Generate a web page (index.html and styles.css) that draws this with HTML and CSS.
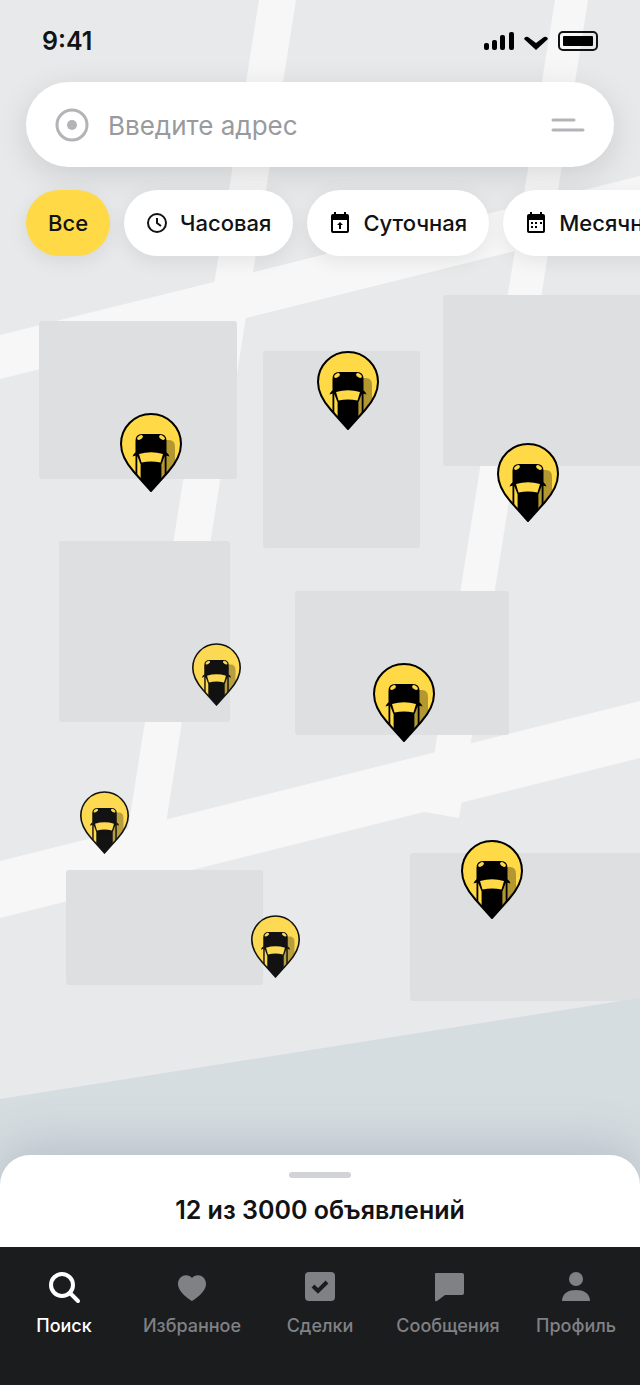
FILE: index.html
```html
<!DOCTYPE html>
<html lang="ru">
<head>
  <meta charset="UTF-8">
  <title>Карта объявлений</title>
  <meta name="viewport" content="width=device-width, initial-scale=1">
  <link rel="stylesheet" href="styles.css">
</head>
<body>
  <svg class="map" viewBox="0 0 640 1385" preserveAspectRatio="xMidYMid slice" role="img" aria-label="Карта">
    <defs>
      <clipPath id="pin-clip">
        <path d="M31 78 L14 59 C5 49 1 41 1 31 A30 30 0 0 1 61 31 C61 41 57 49 48 59 Z"/>
      </clipPath>
      <symbol id="pin" viewBox="0 0 62 79">
        <path class="pin-body" d="M31 78 L14 59 C5 49 1 41 1 31 A30 30 0 0 1 61 31 C61 41 57 49 48 59 Z"/>
        <g clip-path="url(#pin-clip)">
          <path class="pin-shadow" d="M45 27 H49 Q55 27 55 34 V70 H45 Z"/>
          <path d="M15.5 79 V28 Q15.5 21 22 21 H40 Q46.5 21 46.5 28 V79 Z"/>
          <path d="M16 39 Q13 41 12.5 43.5 L16 42.5 Z M46 39 Q49 41 49.5 43.5 L46 42.5 Z"/>
          <ellipse class="pin-light" cx="20" cy="24.5" rx="3.2" ry="1.8" transform="rotate(-35 20 24.5)"/>
          <ellipse class="pin-light" cx="42" cy="24.5" rx="3.2" ry="1.8" transform="rotate(35 42 24.5)"/>
          <path class="pin-light" d="M19 41 Q31 37.5 43 41 L40.5 49.5 Q31 47.5 21.5 49.5 Z"/>
          <path class="pin-light" d="M17.3 43 L20.6 51.5 V66 L17.3 62 Z"/>
          <path class="pin-side" d="M44.7 43 L41.4 51.5 V66 L44.7 62 Z"/>
        </g>
        <path class="pin-line" d="M31 78 L14 59 C5 49 1 41 1 31 A30 30 0 0 1 61 31 C61 41 57 49 48 59 Z"/>
      </symbol>
    </defs>

    <rect class="land" width="640" height="1385"/>

    <g class="roads">
      <path d="M0 335 L640 176 V220 L0 379 Z"/>
      <path d="M0 861 L640 701 V758 L0 918 Z"/>
      <path d="M259 0 H296 L164 836 L125 848 Z"/>
      <path d="M555 0 H588 L459 818 L425 812 Z"/>
    </g>

    <g class="blocks">
      <rect x="39" y="321" width="198" height="158" rx="3"/>
      <rect x="263" y="351" width="157" height="197" rx="3"/>
      <rect x="443" y="295" width="200" height="171" rx="3"/>
      <rect x="59" y="541" width="171" height="181" rx="3"/>
      <rect x="295" y="591" width="214" height="144" rx="3"/>
      <rect x="66" y="870" width="197" height="115" rx="3"/>
      <rect x="410" y="853" width="233" height="148" rx="3"/>
    </g>

    <path class="water" d="M0 1099 L640 998 V1385 H0 Z"/>

    <use href="#pin" x="120" y="413" width="62" height="79"/>
    <use href="#pin" x="317" y="351" width="62" height="79"/>
    <use href="#pin" x="497" y="443" width="62" height="79"/>
    <use href="#pin" x="373" y="663" width="62" height="79"/>
    <use href="#pin" x="461" y="840" width="62" height="79"/>
    <use class="far" href="#pin" x="192" y="643" width="49" height="63"/>
    <use class="far" href="#pin" x="80" y="791" width="49" height="63"/>
    <use class="far" href="#pin" x="251" y="915" width="49" height="63"/>
  </svg>

  <div class="status-bar">
    <span>9:41</span>
    <svg width="114" height="22" viewBox="0 0 114 22" aria-hidden="true">
      <rect x="0" y="13" width="5" height="7" rx="2"/>
      <rect x="8" y="10" width="5" height="10" rx="2"/>
      <rect x="16" y="5" width="5" height="15" rx="2"/>
      <rect x="25" y="2" width="5" height="18" rx="2"/>
      <path d="M40 9 Q41 6 44 7 L52 13 L60 7 Q63 6 64 9 L52 20 Z"/>
      <rect x="75" y="2" width="38" height="18" rx="4" fill="none" stroke="#111214" stroke-width="2"/>
      <rect x="79" y="6" width="30" height="10" rx="1"/>
    </svg>
  </div>

  <form class="search">
    <svg width="34" height="34" viewBox="0 0 34 34" aria-hidden="true">
      <circle cx="17" cy="17" r="15" fill="none" stroke="#b3b4b7" stroke-width="3"/>
      <circle cx="17" cy="17" r="5" fill="#b3b4b7"/>
    </svg>
    <input type="text" placeholder="Введите адрес" aria-label="Введите адрес">
    <button type="button" aria-label="Фильтры">
      <svg width="34" height="14" viewBox="0 0 34 14">
        <path d="M2 2 H23 M2 12 H32" stroke="#b3b4b7" stroke-width="3" stroke-linecap="round"/>
      </svg>
    </button>
  </form>

  <div class="filters">
    <button class="active">Все</button>
    <button>
      <svg width="22" height="22" viewBox="0 0 22 22" fill="none" stroke="#111214" stroke-width="2">
        <circle cx="11" cy="11" r="9"/>
        <path d="M11 6 V11 L15 14"/>
      </svg>
      Часовая
    </button>
    <button>
      <svg width="22" height="22" viewBox="0 0 22 22">
        <path d="M4 2 H5 V0 H7 V2 H15 V0 H17 V2 H18 Q20 2 20 4 V19 Q20 21 18 21 H4 Q2 21 2 19 V4 Q2 2 4 2 Z M4 8 V19 H18 V8 Z" fill-rule="evenodd"/>
        <path d="M11 10 L14 13 H12 V17 H10 V13 H8 Z"/>
      </svg>
      Суточная
    </button>
    <button>
      <svg width="22" height="22" viewBox="0 0 22 22">
        <path d="M4 2 H5 V0 H7 V2 H15 V0 H17 V2 H18 Q20 2 20 4 V19 Q20 21 18 21 H4 Q2 21 2 19 V4 Q2 2 4 2 Z M4 8 V19 H18 V8 Z" fill-rule="evenodd"/>
        <path d="M6 10 h2 v2 h-2 z M10 10 h2 v2 h-2 z M15 10 h2 v2 h-2 z M6 14 h2 v2 h-2 z M10 14 h2 v2 h-2 z"/>
      </svg>
      Месячная
    </button>
  </div>

  <section class="sheet">
    <div class="handle"></div>
    <h1>12 из 3000 объявлений</h1>
  </section>

  <nav class="tabs">
    <a class="active" href="#">
      <svg width="34" height="34" viewBox="0 0 34 34" fill="none" stroke="currentColor">
        <circle cx="15" cy="15" r="11" stroke-width="4"/>
        <path d="M23 23 L31 31" stroke-width="4" stroke-linecap="round"/>
      </svg>
      Поиск
    </a>
    <a href="#">
      <svg width="34" height="34" viewBox="0 0 34 34" fill="currentColor">
        <path d="M17 31 C15 30 3 22 3 14 C3 5 13 3 17 8 C21 3 31 5 31 14 C31 22 19 30 17 31 Z"/>
      </svg>
      Избранное
    </a>
    <a href="#">
      <svg width="34" height="34" viewBox="0 0 34 34">
        <rect x="2" y="2" width="30" height="29" rx="4" fill="currentColor"/>
        <path d="M10 16 L15 21 L24 12" fill="none" stroke="#1b1c1e" stroke-width="4"/>
      </svg>
      Сделки
    </a>
    <a href="#">
      <svg width="34" height="34" viewBox="0 0 34 34" fill="currentColor">
        <path d="M5 3 H31 Q33 3 33 5 V23 Q33 25 31 25 H14 L6 31 Q4 32 4 30 V4 Q4 3 5 3 Z"/>
      </svg>
      Сообщения
    </a>
    <a href="#">
      <svg width="34" height="34" viewBox="0 0 34 34" fill="currentColor">
        <circle cx="17" cy="9" r="7"/>
        <path d="M3 31 C3 23 10 20 17 20 C24 20 31 23 31 31 Z"/>
      </svg>
      Профиль
    </a>
  </nav>
</body>
</html>
```

FILE: styles.css
```css
* { box-sizing: border-box; }
body {
  font-family: Inter, "Liberation Sans", sans-serif;
  margin: 0;
  min-height: 100vh;
  display: flex;
  flex-direction: column;
  position: relative;
  overflow-x: hidden;
  color: #111214;
}
button {
  font: inherit;
  color: inherit;
  border: none;
  cursor: pointer;
}

/* map */
.map {
  position: absolute;
  top: 0; left: 0;
  width: 100%; height: 100%;
  z-index: -1;
}
.land { fill: #e7e9eb; }
.roads { fill: #f7f7f7; }
.blocks { fill: #dddfe1; }
.water { fill: #d5dde0; }
.pin-body, .pin-light { fill: #ffd946; }
.pin-shadow { fill: #b39831; }
.pin-side { fill: #b39831; }
.pin-line {
  fill: none;
  stroke: #000;
  stroke-width: 2;
}
.far { opacity: 0.92; }

/* top */
.status-bar {
  display: flex;
  justify-content: space-between;
  align-items: center;
  height: 82px;
  padding: 0 42px;
  font-size: 25px;
  font-weight: 600;
}
.search {
  display: flex;
  align-items: center;
  gap: 19px;
  height: 85px;
  margin: 0 26px;
  padding: 0 29px;
  background: white;
  border-radius: 43px;
  box-shadow: 0 8px 32px rgba(0, 0, 0, 0.12);
}
.search input {
  flex: 1;
  min-width: 0;
  padding: 2px 0 0;
  border: none;
  outline: none;
  background: none;
  font: inherit;
  font-size: 26px;
}
.search input::placeholder { color: #999a9e; }
.search button {
  display: flex;
  padding: 0;
  background: none;
}
.filters {
  display: flex;
  gap: 14px;
  padding: 23px 26px;
  overflow: hidden;
}
.filters button {
  display: flex;
  flex: none;
  align-items: center;
  gap: 12px;
  height: 66px;
  padding: 0 22px;
  background: white;
  border-radius: 33px;
  box-shadow: 0 5px 20px rgba(0, 0, 0, 0.08);
  font-size: 22px;
  font-weight: 500;
}
.filters .active { background: #ffd946; }

/* bottom */
.sheet {
  display: flex;
  flex-direction: column;
  align-items: center;
  gap: 17px;
  margin-top: auto;
  padding: 17px 20px 21px;
  background: white;
  border-radius: 30px 30px 0 0;
  box-shadow: 0 -8px 48px rgba(90, 100, 130, 0.25);
}
.handle {
  width: 62px;
  height: 6px;
  background: #d2d3d6;
  border-radius: 3px;
}
.sheet h1 {
  margin: 0;
  font-size: 25px;
  line-height: 31px;
  font-weight: 600;
}
.tabs {
  display: grid;
  grid-template-columns: repeat(5, 1fr);
  height: 138px;
  padding-top: 23px;
  background: #1b1c1e;
}
.tabs a {
  display: flex;
  flex-direction: column;
  align-items: center;
  gap: 11px;
  color: #808185;
  font-size: 18px;
  line-height: 22px;
  font-weight: 500;
  text-decoration: none;
}
.tabs .active { color: white; }
```
